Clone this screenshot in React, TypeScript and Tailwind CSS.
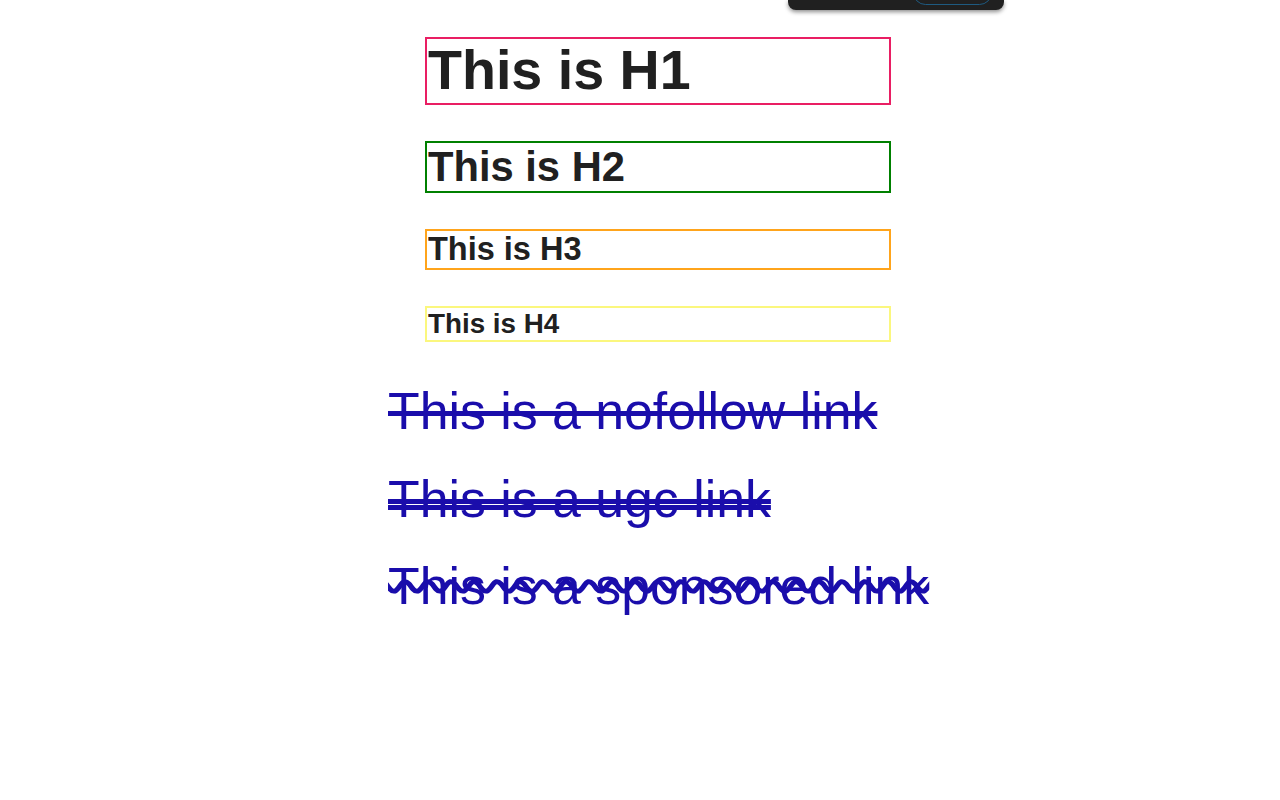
export default function App() {
  const headings = [
    { label: "This is H1", Tag: "h1", className: "text-[55.6px] border-[#e91e63]" },
    { label: "This is H2", Tag: "h2", className: "text-[41.7px] border-[#008000]" },
    { label: "This is H3", Tag: "h3", className: "text-[32.5px] border-[#ffa41b]" },
    { label: "This is H4", Tag: "h4", className: "text-[27.8px] border-[#fbf77e]" },
  ] as const;

  return (
    <div className="relative min-h-screen bg-white font-['Liberation_Sans',Arial,sans-serif]">
      {/* Floating toolbar, mostly off screen */}
      <div className="absolute left-[788px] top-0 h-[10px] w-[216px] overflow-hidden rounded-b-lg bg-[#202020] shadow-[0_2px_4px_rgba(0,0,0,0.45)]">
        <div className="absolute left-[125px] top-[-20px] h-[25px] w-[79px] rounded-full border border-[#1e5a80]" />
      </div>

      <main className="pl-[388px] pt-[37px]">
        <div className="ml-[37px] flex w-[466px] flex-col gap-[36px]">
          {headings.map(({ label, Tag, className }) => (
            <Tag
              key={label}
              className={`border-2 pl-[1px] font-bold leading-[1.149] text-[#202020] ${className}`}
            >
              {label}
            </Tag>
          ))}
        </div>

        <div className="mt-[40px] flex flex-col gap-[28px] text-[51.8px] leading-[1.149] text-[#1a0dab]">
          <a href="#" rel="nofollow" className="w-fit line-through">
            This is a nofollow link
          </a>
          <a href="#" rel="ugc" className="w-fit line-through decoration-double">
            This is a ugc link
          </a>
          <a href="#" rel="sponsored" className="w-fit line-through decoration-wavy">
            This is a sponsored link
          </a>
        </div>
      </main>
    </div>
  );
}
